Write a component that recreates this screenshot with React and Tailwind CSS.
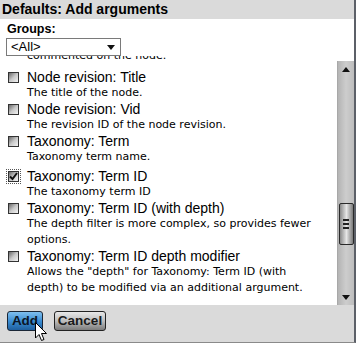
import React from 'react';

const items = [
  { title: 'Node revision: Title', desc: ['The title of the node.'] },
  { title: 'Node revision: Vid', desc: ['The revision ID of the node revision.'] },
  { title: 'Taxonomy: Term', desc: ['Taxonomy term name.'] },
  { title: 'Taxonomy: Term ID', desc: ['The taxonomy term ID'], checked: true },
  { title: 'Taxonomy: Term ID (with depth)', desc: ['The depth filter is more complex, so provides fewer', 'options.'] },
  { title: 'Taxonomy: Term ID depth modifier', desc: ['Allows the "depth" for Taxonomy: Term ID (with', 'depth) to be modified via an additional argument.'] },
];

const Checkbox = ({ checked }) => (
  <div className={`mt-[2px] w-[13px] h-[13px] shrink-0 p-[1px] ${checked ? 'outline outline-1 outline-dotted outline-[#555]' : ''}`}>
    <div className="w-full h-full border border-[#333] bg-gradient-to-br from-[#6b6b6b] via-[#c9c9c9] to-[#f4f4f4] flex items-center justify-center">
      {checked && (
        <svg width="9" height="9" viewBox="0 0 9 9">
          <path d="M1 4.5 L3.5 7 L8 1" stroke="#111" strokeWidth="2" fill="none" />
        </svg>
      )}
    </div>
  </div>
);

const Scrollbar = () => (
  <div className="w-[17px] mt-[5px] bg-gradient-to-r from-[#b4b4b4] via-[#cdcdcd] to-[#bdbdbd] flex flex-col items-center border-l border-[#a8a8a8]">
    <div className="h-[16px] flex items-center justify-center">
      <svg width="8" height="5" viewBox="0 0 8 5"><path d="M0 5 L4 0 L8 5 Z" fill="#111" /></svg>
    </div>
    <div className="h-[126px]" />
    <div className="w-[15px] h-[42px] border border-[#2a2a2a] rounded-[2px] bg-gradient-to-r from-[#8a8a8a] via-[#e6e6e6] to-[#7a7a7a] flex flex-col items-center justify-center gap-[2px]">
      <div className="w-[6px] h-[2px] bg-[#222]" />
      <div className="w-[6px] h-[2px] bg-[#222]" />
      <div className="w-[6px] h-[2px] bg-[#222]" />
    </div>
    <div className="flex-1" />
    <div className="h-[16px] flex items-center justify-center">
      <svg width="8" height="5" viewBox="0 0 8 5"><path d="M0 0 L4 5 L8 0 Z" fill="#111" /></svg>
    </div>
  </div>
);

export default function App() {
  return (
    <div className="w-[360px] h-[344px] bg-white relative overflow-hidden text-black font-['Liberation_Sans',Arial,sans-serif]">
      <div className="w-[356px] h-[343px] border-r-2 border-b border-r-[#5c6068] border-b-[#8a8a8a] flex flex-col">
        <div className="h-[19px] bg-[#dadada] px-[2px] font-bold text-[14px] leading-[19px]">Defaults: Add arguments</div>
        <div className="px-[7px] pt-[3px] font-bold text-[12.5px] leading-[14px]">Groups:</div>
        <div className="mx-[6px] mt-[2px] w-[115px] h-[18px] border border-[#7a7a7a] bg-white flex items-center justify-between pl-[4px] pr-[5px]">
          <span className="text-[13px] leading-[14px]">&lt;All&gt;</span>
          <svg width="8" height="5" viewBox="0 0 8 5"><path d="M0 0 L4 5 L8 0 Z" fill="#111" /></svg>
        </div>
        <div className="flex-1 flex min-h-0">
          <div className="flex-1 overflow-hidden pl-[7px]">
            <div className="-mt-[8px] font-['DejaVu_Sans',Verdana,sans-serif] text-[11px] leading-[16px] pl-[20px]">commented on the node.</div>
            <div className="mt-[5px] flex flex-col">
              {items.map((it) => (
                <div key={it.title} className={`flex gap-[7px] ${it.checked ? 'mt-[3px]' : ''}`}>
                  <Checkbox checked={it.checked} />
                  <div>
                    <div className="text-[14px] leading-[16px] whitespace-nowrap">{it.title}</div>
                    {it.desc.map((d) => (
                      <div key={d} className="font-['DejaVu_Sans',Verdana,sans-serif] text-[11px] leading-[16px] whitespace-nowrap">{d}</div>
                    ))}
                  </div>
                </div>
              ))}
            </div>
          </div>
          <Scrollbar />
        </div>
        <div className="h-[37px] bg-[#dadada] flex items-start gap-[11px] pt-[6px] pl-[7px]">
          <button className="w-[36px] h-[20px] rounded-[3px] border border-[#1a2636] bg-gradient-to-b from-[#7fbfee] via-[#3b8ed4] to-[#1f5f9e] text-[13.5px] font-bold leading-[18px] text-[#0b1626]">Add</button>
          <button className="w-[52px] h-[20px] rounded-[3px] border border-[#222] bg-gradient-to-b from-[#e8e8e8] via-[#bdbdbd] to-[#7c7c7c] text-[13.5px] font-bold leading-[18px] text-[#1a1a1a]">Cancel</button>
        </div>
      </div>
      <svg className="absolute left-[35px] top-[322px]" width="14" height="22" viewBox="0 0 14 22">
        <path d="M0.5 0.5 L0.5 16 L4 12.5 L6.5 18.5 L9 17.5 L6.5 11.5 L11.5 11.5 Z" fill="#fff" stroke="#000" strokeWidth="1" />
      </svg>
    </div>
  );
}
